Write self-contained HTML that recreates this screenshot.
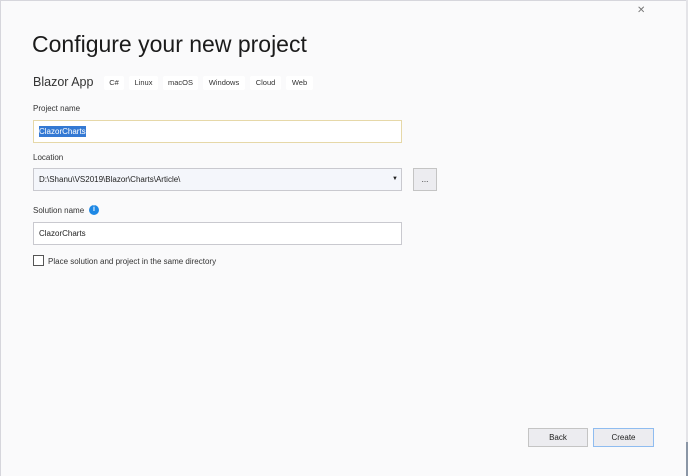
<!DOCTYPE html>
<html><head><meta charset="utf-8"><style>
*{box-sizing:border-box;margin:0;padding:0}
body{width:688px;height:476px;background:#fafafb;font-family:"Liberation Sans",sans-serif;color:#1e1e1e;position:relative;overflow:hidden}
.abs{position:absolute}
.rb{right:0;top:0;width:2px;height:476px;background:#e4e4e8}
.rb2{right:0;top:442px;width:2px;height:34px;background:#8a96a6}
h1{position:absolute;left:32px;top:31px;font-size:23px;font-weight:normal;color:#1b1b1b;letter-spacing:0}
.sub{left:33px;top:75px;font-size:12.5px;color:#333}
.tag{top:76px;height:14px;font-size:7.5px;color:#333;background:#fff;border-radius:2px;text-align:center;line-height:14px}
.lbl{font-size:8px;color:#333}
.inp{left:33px;width:369px;height:23px;border:1px solid #c9c9cf;background:#fff;font-size:8px;line-height:21px;padding-left:5px}
.btn{height:19px;border:1px solid #c4c4c4;background:#ececf0;font-size:8px;text-align:center;line-height:17px}
</style></head><body>
<div class="abs" style="left:0;top:0;width:688px;height:1px;background:#d6d6dc"></div>
<div class="abs" style="left:0;top:0;width:1px;height:476px;background:#d6d6dc"></div>
<div class="abs rb"></div><div class="abs rb2"></div>
<div class="abs" style="left:637px;top:5px;font-size:10px;color:#777">✕</div>
<h1>Configure your new project</h1>
<div class="abs sub">Blazor App</div>
<div class="abs tag" style="left:104px;width:20px">C#</div>
<div class="abs tag" style="left:129px;width:29px">Linux</div>
<div class="abs tag" style="left:163px;width:35px">macOS</div>
<div class="abs tag" style="left:203px;width:42px">Windows</div>
<div class="abs tag" style="left:250px;width:31px">Cloud</div>
<div class="abs tag" style="left:286px;width:27px">Web</div>
<div class="abs lbl" style="left:33px;top:104px">Project name</div>
<div class="abs inp" style="top:120px;border-color:#e6d8a8"><span style="background:#3479d3;color:#fff;padding:1px 0">ClazorCharts</span></div>
<div class="abs lbl" style="left:33px;top:153px">Location</div>
<div class="abs inp" style="top:168px;background:#f4f6fb">D:\Shanu\VS2019\Blazor\Charts\Article\<span style="position:absolute;right:3px;top:0;font-size:6px">▼</span></div>
<div class="abs btn" style="left:413px;top:168px;width:24px;height:23px;line-height:21px">...</div>
<div class="abs lbl" style="left:33px;top:206px">Solution name</div>
<div class="abs" style="left:89px;top:205px;width:10px;height:10px;border-radius:50%;background:#1e88e5;color:#fff;font-size:7px;font-weight:bold;text-align:center;line-height:10px">i</div>
<div class="abs inp" style="top:222px">ClazorCharts</div>
<div class="abs" style="left:33px;top:255px;width:11px;height:11px;border:1px solid #555;background:#fff"></div>
<div class="abs lbl" style="left:48px;top:257px">Place solution and project in the same directory</div>
<div class="abs btn" style="left:528px;top:428px;width:60px">Back</div>
<div class="abs btn" style="left:593px;top:428px;width:61px;border-color:#8fbcf0">Create</div>
</body></html>
